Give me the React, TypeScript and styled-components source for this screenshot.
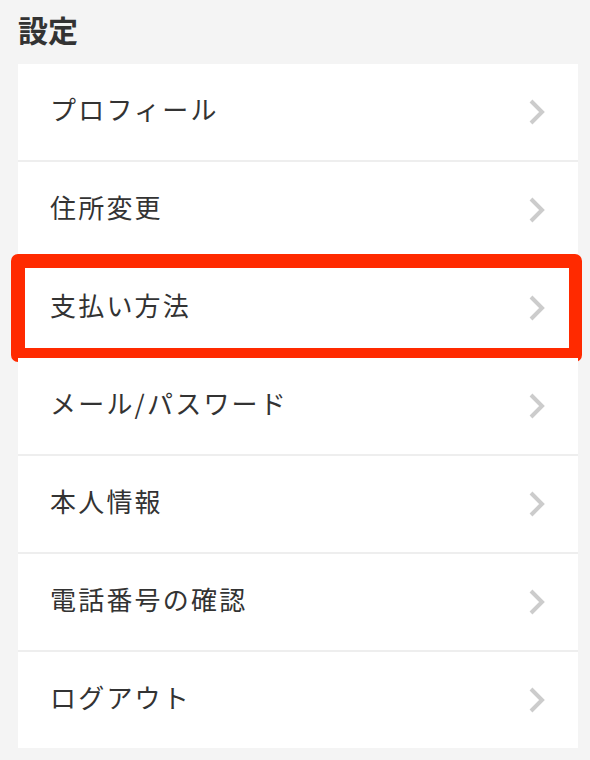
import React from "react";
import styled, { createGlobalStyle } from "styled-components";

const GlobalStyle = createGlobalStyle`
  html, body {
    margin: 0;
    padding: 0;
    background: #f4f4f4;
  }
  body {
    font-family: "Noto Sans CJK JP", "Noto Sans", sans-serif;
    color: #333;
  }
`;

const Page = styled.div`
  width: 590px;
  min-height: 760px;
  background: #f4f4f4;
  padding: 0 12px 0 18px;
  box-sizing: border-box;
`;

const Title = styled.h1`
  margin: 0;
  height: 64px;
  display: flex;
  align-items: center;
  padding-left: 0;
  padding-bottom: 7px;
  box-sizing: border-box;
  font-size: 30px;
  font-weight: 700;
  color: #333;
  line-height: 1;
`;

const List = styled.ul`
  list-style: none;
  margin: 0;
  padding: 0;
  width: 560px;
  display: flex;
  flex-direction: column;
  gap: 2px;
  background-color: #eeeeee;
`;

const Row = styled.li`
  position: relative;
  height: 96px;
  background: #fff;
  display: flex;
  align-items: center;
  justify-content: space-between;
  padding: 0 32px 0 32px;
  box-sizing: border-box;
`;

const Label = styled.span`
  font-size: 26px;
  letter-spacing: 2.2px;
  color: #333;
  line-height: 1;
  margin-bottom: 6px;
`;

const Highlight = styled.div`
  position: absolute;
  top: -6px;
  bottom: -6px;
  left: -7px;
  right: -4px;
  border: 14px solid #ff2a00;
  border-right-width: 13px;
  border-radius: 7px;
  pointer-events: none;
`;

const ChevronIcon = styled.svg`
  flex: none;
`;

const Chevron = () => (
  <ChevronIcon width="18" height="26" viewBox="0 0 18 26" fill="none">
    <path d="M3 2 L14 13 L3 24" stroke="#cccccc" strokeWidth="4" />
  </ChevronIcon>
);

const items = [
  "プロフィール",
  "住所変更",
  "支払い方法",
  "メール/パスワード",
  "本人情報",
  "電話番号の確認",
  "ログアウト",
];

export default function App() {
  return (
    <>
      <GlobalStyle />
      <Page>
        <Title>設定</Title>
        <List>
          {items.map((label, i) => (
            <Row key={label}>
              <Label>{label}</Label>
              <Chevron />
              {i === 2 && <Highlight />}
            </Row>
          ))}
        </List>
      </Page>
    </>
  );
}
